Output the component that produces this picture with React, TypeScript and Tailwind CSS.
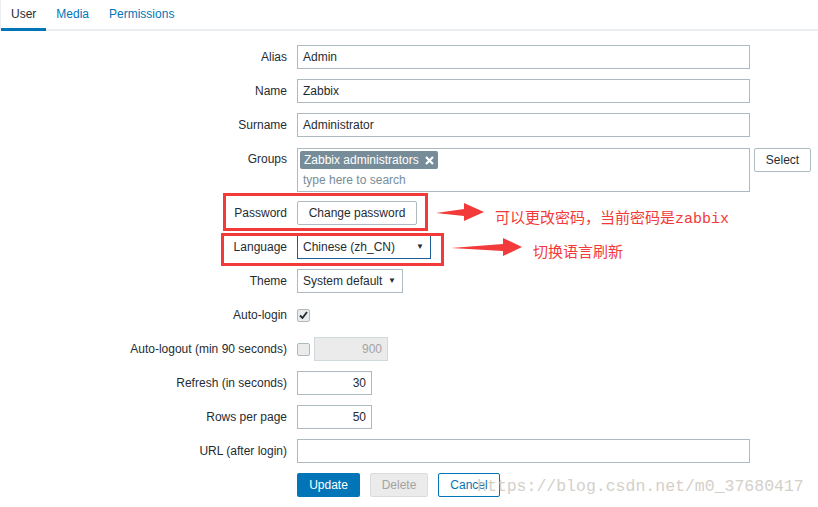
import React from "react";

const font = { fontFamily: '"Liberation Sans", Arial, sans-serif' };

function Label({ children }: { children: React.ReactNode }) {
  return (
    <div className="w-[297px] pr-[10px] text-right text-[12px] text-[#1f2c33] leading-[25px] shrink-0">
      {children}
    </div>
  );
}

function Row({ label, children, h = "h-[24px]" }: { label: string; children: React.ReactNode; h?: string }) {
  return (
    <div className={`flex items-start ${h}`}>
      <Label>{label}</Label>
      <div className="flex items-center h-full">{children}</div>
    </div>
  );
}

function TextInput({ value, w, right }: { value: string; w: string; right?: boolean }) {
  return (
    <div
      className={`${w} h-[24px] border border-[#acbbc2] bg-white px-[5px] text-[12px] text-[#1f2c33] leading-[23px] ${right ? "text-right" : ""}`}
    >
      {value}
    </div>
  );
}

function Checkbox({ checked }: { checked?: boolean }) {
  return (
    <div className="w-[13px] h-[13px] border border-[#acbbc2] rounded-[2px] bg-[#ebebeb] flex items-center justify-center">
      {checked && (
        <svg width="9" height="8" viewBox="0 0 9 8">
          <path d="M1 4.5 L3.5 7 L8 1" stroke="#1f2c33" strokeWidth="1.8" fill="none" />
        </svg>
      )}
    </div>
  );
}

export default function App() {
  return (
    <div className="relative w-[818px] h-[507px] bg-white overflow-hidden" style={font}>
      {/* Tabs */}
      <div className="flex h-[31px] border-b-2 border-[#ebeef0] border-l border-l-[#ebeef0]">
        <div className="px-[10px] text-[12px] leading-[29px] text-[#1f2c33] border-b-[3px] border-[#0275b8] -mb-[2px] h-[31px]">
          User
        </div>
        <div className="px-[10px] text-[12px] leading-[29px] text-[#0275b8]">Media</div>
        <div className="px-[10px] text-[12px] leading-[29px] text-[#0275b8]">Permissions</div>
      </div>

      {/* Form */}
      <div className="flex flex-col gap-[10px] mt-[14px]">
        <Row label="Alias"><TextInput value="Admin" w="w-[453px]" /></Row>
        <Row label="Name"><TextInput value="Zabbix" w="w-[453px]" /></Row>
        <Row label="Surname"><TextInput value="Administrator" w="w-[453px]" /></Row>
        <div className="flex items-start h-[44px]">
          <Label>Groups</Label>
          <div className="flex items-start gap-[4px] pt-[1px]">
            <div className="w-[453px] h-[44px] border border-[#acbbc2] px-[2px] pt-[2px]">
              <div className="flex w-fit items-center h-[18px] bg-[#768d99] text-white text-[12px] px-[4px] rounded-[2px] gap-[6px]">
                <span>Zabbix administrators</span>
                <svg width="9" height="9" viewBox="0 0 9 9">
                  <path d="M1 1 L8 8 M8 1 L1 8" stroke="white" strokeWidth="2.2" />
                </svg>
              </div>
              <div className="text-[12px] text-[#768d99] pl-[3px] leading-[16px] mt-[3px]">type here to search</div>
            </div>
            <div className="w-[57px] h-[24px] border border-[#acbbc2] rounded-[2px] bg-white text-[12px] text-[#1f2c33] flex items-center justify-center">
              Select
            </div>
          </div>
        </div>
        <Row label="Password">
          <div className="w-[120px] h-[24px] border border-[#acbbc2] rounded-[2px] bg-white text-[12px] text-[#1f2c33] flex items-center justify-center">
            Change password
          </div>
        </Row>
        <Row label="Language">
          <div className="w-[134px] h-[24px] border border-[#1d5e95] bg-white text-[12px] text-[#1f2c33] flex items-center justify-between px-[5px]">
            <span>Chinese (zh_CN)</span>
            <span className="text-[8px] pr-[1px]">▼</span>
          </div>
        </Row>
        <Row label="Theme">
          <div className="w-[106px] h-[24px] border border-[#acbbc2] bg-white text-[12px] text-[#1f2c33] flex items-center justify-between px-[5px]">
            <span>System default</span>
            <span className="text-[8px] pr-[1px]">▼</span>
          </div>
        </Row>
        <Row label="Auto-login"><Checkbox checked /></Row>
        <Row label="Auto-logout (min 90 seconds)">
          <div className="flex items-center gap-[4px]">
            <Checkbox />
            <div className="w-[74px] h-[24px] border border-[#d2d9dc] bg-[#ebebeb] text-[12px] text-[#a3a3a3] text-right px-[5px] leading-[23px]">
              900
            </div>
          </div>
        </Row>
        <Row label="Refresh (in seconds)"><TextInput value="30" w="w-[75px]" right /></Row>
        <Row label="Rows per page"><TextInput value="50" w="w-[75px]" right /></Row>
        <Row label="URL (after login)"><TextInput value="" w="w-[453px]" /></Row>
        <div className="flex items-start h-[24px]">
          <div className="w-[297px] shrink-0" />
          <div className="flex gap-[10px]">
            <div className="w-[63px] h-[24px] rounded-[2px] bg-[#0275b8] text-white text-[12px] flex items-center justify-center">
              Update
            </div>
            <div className="w-[58px] h-[24px] rounded-[2px] bg-[#ebebeb] border border-[#dcdcdc] text-[#a3a3a3] text-[12px] flex items-center justify-center">
              Delete
            </div>
            <div className="w-[62px] h-[24px] rounded-[2px] bg-white border border-[#0275b8] text-[#0275b8] text-[12px] flex items-center justify-center">
              Cancel
            </div>
          </div>
        </div>
      </div>

      {/* Annotations */}
      <div className="absolute left-[223px] top-[193px] w-[205px] h-[38px] border-[3px] border-[#f23a3a]" />
      <div className="absolute left-[221px] top-[233px] w-[223px] h-[33px] border-[3px] border-[#f23a3a]" />

      <svg className="absolute left-[436px] top-[203px]" width="50" height="20" viewBox="0 0 50 20">
        <polygon points="0,10 28,6 28,0 48,9 28,18 28,13" fill="#f23a3a" />
      </svg>
      <svg className="absolute left-[451px] top-[238px]" width="72" height="20" viewBox="0 0 72 20">
        <polygon points="0,10 52,6 52,0 71,9 52,18 52,13" fill="#f23a3a" />
      </svg>

      <div
        className="absolute left-[495px] top-[207px] text-[15px] text-[#f23a3a] leading-[20px] whitespace-nowrap"
        style={{ fontFamily: '"Noto Sans CJK SC", "Liberation Mono", sans-serif' }}
      >
        可以更改密码，当前密码是<span style={{ fontFamily: '"Liberation Mono", monospace' }}>zabbix</span>
      </div>
      <div
        className="absolute left-[533px] top-[241px] text-[15px] text-[#f23a3a] leading-[20px] whitespace-nowrap"
        style={{ fontFamily: '"Noto Sans CJK SC", sans-serif' }}
      >
        切换语言刷新
      </div>

      <div
        className="absolute left-[477px] top-[477px] text-[16.5px] text-[#cfccc4] leading-[20px] whitespace-nowrap opacity-90"
        style={{ fontFamily: '"Liberation Mono", "DejaVu Sans Mono", monospace' }}
      >
        https://blog.csdn.net/m0_37680417
      </div>
    </div>
  );
}
